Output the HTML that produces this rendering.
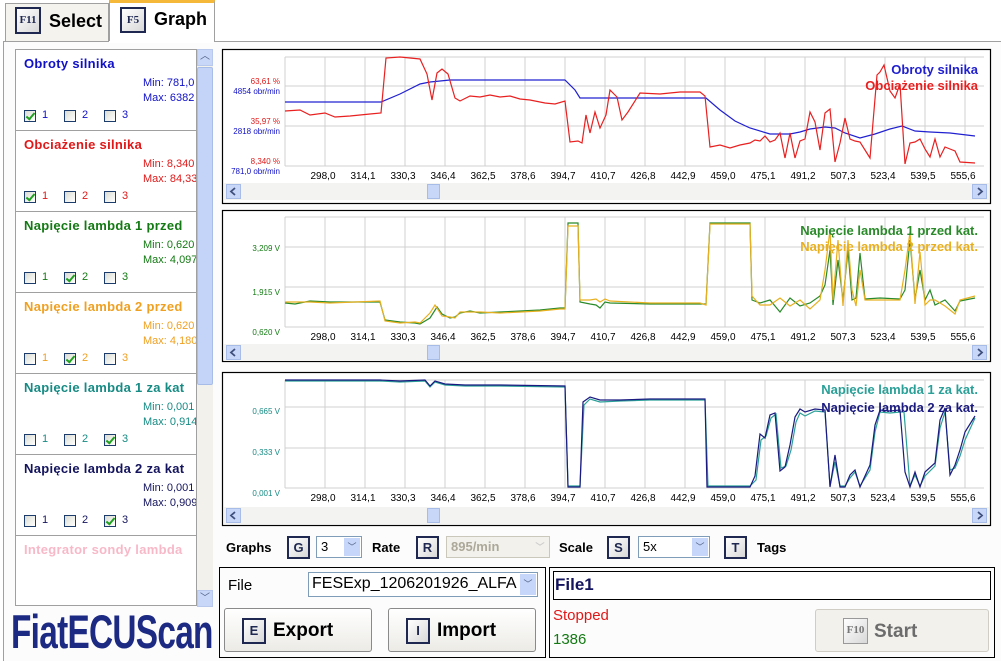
<!DOCTYPE html>
<html><head><meta charset="utf-8"><style>
*{box-sizing:border-box;margin:0;padding:0}
body{width:1001px;height:661px;background:#fff;font-family:"Liberation Sans",Arial,sans-serif;position:relative;overflow:hidden}
.a{position:absolute}
.tab{position:absolute;border:1px solid #a0a0a0;border-bottom:none;font-weight:bold;font-size:18px}
.key{position:absolute;width:23px;height:23px;border:2px solid #1e2850;background:linear-gradient(135deg,#fff,#d8d8d8);font-weight:bold;font-size:13px;text-align:center;line-height:19px;color:#1e2850}
.item{position:absolute;left:16px;width:180px;height:81px;border-bottom:1px solid #a0a0a0;overflow:hidden}
.item .t{position:absolute;left:8px;top:6px;font-weight:bold;font-size:13px;white-space:nowrap;letter-spacing:.3px}
.item .m{position:absolute;left:127px;font-size:11px;white-space:nowrap}
.cb{position:absolute;top:60px;width:12px;height:12px;border:1px solid #1c3c6c;background:linear-gradient(135deg,#dcdcd4,#fff)}
.cbl{position:absolute;top:59px;font-size:11px}
.chk::after{content:"";position:absolute;left:3px;top:0px;width:3px;height:7px;border:solid #21a121;border-width:0 2px 2px 0;transform:rotate(40deg)}
.lbl{position:absolute;font-weight:bold;font-size:13px}
.combo{position:absolute;height:22px;border:1px solid #7f9db9;background:#fff;font-size:13px;padding:2px 4px}
.combo i{position:absolute;right:1px;top:1px;width:16px;height:18px;background:#c6d6fa;font-style:normal;color:#4d6185;font-size:9px;text-align:center;line-height:18px}
.btn{position:absolute;border:1px solid #8a8a8a;border-radius:3px;background:linear-gradient(#fff,#ecebe6);font-weight:bold;font-size:19px}
</style></head><body>
<div class="tab" style="left:5px;top:3px;width:104px;height:39px;background:#f4f3ee"></div>
<div class="key" style="left:15px;top:7px;width:26px;height:27px;font-size:11px;line-height:23px;font-family:'Liberation Serif',serif">F11</div>
<div class="a" style="left:49px;top:11px;font-weight:bold;font-size:18px">Select</div>
<div class="tab" style="left:109px;top:0;width:106px;height:43px;background:#fff;border-top:3px solid #f6b838;border-color:#a0a0a0;border-top-color:#f6b838"></div>
<div class="key" style="left:120px;top:7px;width:26px;height:26px;font-size:11px;line-height:22px;font-family:'Liberation Serif',serif">F5</div>
<div class="a" style="left:154px;top:9px;font-weight:bold;font-size:18px">Graph</div>
<div class="a" style="left:3px;top:41px;width:998px;height:620px;border:1px solid #a0a0a0;border-bottom:none;border-right:none;background:#fcfcfc"></div>
<div class="a" style="left:109px;top:41px;width:105px;height:2px;background:#fff"></div>
<div class="a" style="left:15px;top:49px;width:182px;height:557px;border:1px solid #a0a0a0;background:#fff"></div>
<div class="item" style="top:50px;color:#1010c8"><div class="t">Obroty silnika</div><div class="m" style="top:27px">Min: 781,0</div><div class="m" style="top:42px">Max: 6382</div>
<div class="cb chk" style="left:8px"></div><div class="cbl" style="left:26px">1</div><div class="cb" style="left:48px"></div><div class="cbl" style="left:66px">2</div><div class="cb" style="left:88px"></div><div class="cbl" style="left:106px">3</div></div>
<div class="item" style="top:131px;color:#e01818"><div class="t">Obciażenie silnika</div><div class="m" style="top:27px">Min: 8,340</div><div class="m" style="top:42px">Max: 84,33</div>
<div class="cb chk" style="left:8px"></div><div class="cbl" style="left:26px">1</div><div class="cb" style="left:48px"></div><div class="cbl" style="left:66px">2</div><div class="cb" style="left:88px"></div><div class="cbl" style="left:106px">3</div></div>
<div class="item" style="top:212px;color:#137a13"><div class="t">Napięcie lambda 1 przed</div><div class="m" style="top:27px">Min: 0,620</div><div class="m" style="top:42px">Max: 4,097</div>
<div class="cb" style="left:8px"></div><div class="cbl" style="left:26px">1</div><div class="cb chk" style="left:48px"></div><div class="cbl" style="left:66px">2</div><div class="cb" style="left:88px"></div><div class="cbl" style="left:106px">3</div></div>
<div class="item" style="top:293px;color:#f0a020"><div class="t">Napięcie lambda 2 przed</div><div class="m" style="top:27px">Min: 0,620</div><div class="m" style="top:42px">Max: 4,180</div>
<div class="cb" style="left:8px"></div><div class="cbl" style="left:26px">1</div><div class="cb chk" style="left:48px"></div><div class="cbl" style="left:66px">2</div><div class="cb" style="left:88px"></div><div class="cbl" style="left:106px">3</div></div>
<div class="item" style="top:374px;color:#168b84"><div class="t">Napięcie lambda 1 za kat</div><div class="m" style="top:27px">Min: 0,001</div><div class="m" style="top:42px">Max: 0,914</div>
<div class="cb" style="left:8px"></div><div class="cbl" style="left:26px">1</div><div class="cb" style="left:48px"></div><div class="cbl" style="left:66px">2</div><div class="cb chk" style="left:88px"></div><div class="cbl" style="left:106px">3</div></div>
<div class="item" style="top:455px;color:#14145e"><div class="t">Napięcie lambda 2 za kat</div><div class="m" style="top:27px">Min: 0,001</div><div class="m" style="top:42px">Max: 0,909</div>
<div class="cb" style="left:8px"></div><div class="cbl" style="left:26px">1</div><div class="cb" style="left:48px"></div><div class="cbl" style="left:66px">2</div><div class="cb chk" style="left:88px"></div><div class="cbl" style="left:106px">3</div></div>
<div class="a" style="left:24px;top:542px;font-weight:bold;font-size:13px;color:#f8b8c8;white-space:nowrap;letter-spacing:.3px">Integrator sondy lambda</div>
<div class="a" style="left:197px;top:49px;width:16px;height:558px;background:#f2f1ec"></div>
<div class="a" style="left:197px;top:49px;width:16px;height:17px;background:#c8d6f8;border:1px solid #b8c8ec;color:#4d6185;font-size:10px;text-align:center;line-height:14px">︿</div>
<div class="a" style="left:197px;top:67px;width:16px;height:318px;background:#c4d4f8;border:1px solid #a8bce8;border-radius:2px"></div>
<div class="a" style="left:197px;top:590px;width:16px;height:17px;background:#c8d6f8;border:1px solid #b8c8ec;color:#4d6185;font-size:10px;text-align:center;line-height:15px">﹀</div>
<svg class="a" style="left:0;top:0" width="1001" height="661" font-family="Liberation Sans,Arial,sans-serif">
<g fill="#fff" stroke="#000" stroke-width="1.2">
<rect x="222.5" y="49.5" width="768" height="154"/>
<rect x="222.5" y="210.5" width="768" height="151"/>
<rect x="222.5" y="372.5" width="768" height="153"/>
</g>
<g stroke="#d0d0d0" stroke-width="1">
<path d="M285 57V166M325 57V166M365 57V166M405 57V166M445 57V166M485 57V166M525 57V166M565 57V166M605 57V166M645 57V166M685 57V166M725 57V166M765 57V166M805 57V166M845 57V166M885 57V166M925 57V166M965 57V166M285 57H984M285 86H984M285 126H984M285 166H984"/>
<path d="M285 217V327M325 217V327M365 217V327M405 217V327M445 217V327M485 217V327M525 217V327M565 217V327M605 217V327M645 217V327M685 217V327M725 217V327M765 217V327M805 217V327M845 217V327M885 217V327M925 217V327M965 217V327M285 217H984M285 247H984M285 287H984M285 327H984"/>
<path d="M285 380V488M325 380V488M365 380V488M405 380V488M445 380V488M485 380V488M525 380V488M565 380V488M605 380V488M645 380V488M685 380V488M725 380V488M765 380V488M805 380V488M845 380V488M885 380V488M925 380V488M965 380V488M285 380H984M285 407H984M285 448H984M285 488H984"/>
</g>
<g font-size="10" text-anchor="middle" fill="#000">
<text y="179"><tspan x="323">298,0</tspan><tspan x="363">314,1</tspan><tspan x="403">330,3</tspan><tspan x="443">346,4</tspan><tspan x="483">362,5</tspan><tspan x="523">378,6</tspan><tspan x="563">394,7</tspan><tspan x="603">410,7</tspan><tspan x="643">426,8</tspan><tspan x="683">442,9</tspan><tspan x="723">459,0</tspan><tspan x="763">475,1</tspan><tspan x="803">491,2</tspan><tspan x="843">507,3</tspan><tspan x="883">523,4</tspan><tspan x="923">539,5</tspan><tspan x="963">555,6</tspan></text>
<text y="340"><tspan x="323">298,0</tspan><tspan x="363">314,1</tspan><tspan x="403">330,3</tspan><tspan x="443">346,4</tspan><tspan x="483">362,5</tspan><tspan x="523">378,6</tspan><tspan x="563">394,7</tspan><tspan x="603">410,7</tspan><tspan x="643">426,8</tspan><tspan x="683">442,9</tspan><tspan x="723">459,0</tspan><tspan x="763">475,1</tspan><tspan x="803">491,2</tspan><tspan x="843">507,3</tspan><tspan x="883">523,4</tspan><tspan x="923">539,5</tspan><tspan x="963">555,6</tspan></text>
<text y="501"><tspan x="323">298,0</tspan><tspan x="363">314,1</tspan><tspan x="403">330,3</tspan><tspan x="443">346,4</tspan><tspan x="483">362,5</tspan><tspan x="523">378,6</tspan><tspan x="563">394,7</tspan><tspan x="603">410,7</tspan><tspan x="643">426,8</tspan><tspan x="683">442,9</tspan><tspan x="723">459,0</tspan><tspan x="763">475,1</tspan><tspan x="803">491,2</tspan><tspan x="843">507,3</tspan><tspan x="883">523,4</tspan><tspan x="923">539,5</tspan><tspan x="963">555,6</tspan></text>
</g>
<g font-size="8" text-anchor="end">
<text x="280" y="84" fill="#e01818">63,61 %</text><text x="280" y="94" fill="#1010c8">4854 obr/min</text>
<text x="280" y="124" fill="#e01818">35,97 %</text><text x="280" y="134" fill="#1010c8">2818 obr/min</text>
<text x="280" y="164" fill="#e01818">8,340 %</text><text x="280" y="174" fill="#1010c8">781,0 obr/min</text>
<g fill="#137a13"><text x="280" y="251">3,209 V</text><text x="280" y="295">1,915 V</text><text x="280" y="335">0,620 V</text></g>
<g fill="#168b84"><text x="280" y="414">0,665 V</text><text x="280" y="455">0,333 V</text><text x="280" y="496">0,001 V</text></g>
</g>
<g fill="none" stroke-width="1.2">
<polyline stroke="#2020d0" points="285,102 381,102 400,94 420,84 430,82 440,81 450,80 565,80 575,90 580,98 706,98 720,110 735,121 750,128 770,134 790,134 800,132 810,129 825,127 835,128 845,133 860,138 875,134 890,129 902,126 915,131 930,132 950,133 975,136"/>
<polyline stroke="#e82020" points="285,111 300,110 310,115 325,113 335,117 350,116 370,114 381,113 386,58 400,57 420,59 427,74 432,100 437,73 442,69 448,74 455,98 460,101 470,96 480,97 490,95 500,97 510,96 520,99 530,100 545,103 555,104 565,101 570,142 578,141 582,143 586,115 590,133 595,112 600,128 606,115 610,90 617,97 622,120 628,112 640,93 660,94 680,92 700,92 705,96 710,147 720,145 730,148 740,145 750,143 755,140 760,141 765,136 770,142 775,140 780,133 785,158 790,133 795,158 800,141 805,139 810,112 815,122 820,150 825,113 830,109 835,162 840,143 845,118 850,139 855,141 860,142 865,150 870,158 877,75 880,72 884,65 890,91 895,98 900,84 905,164 910,143 915,142 920,139 925,149 930,157 935,139 940,157 945,147 950,149 955,151 960,162 975,163"/>
<polyline stroke="#2a8a2a" points="285,303 295,304 310,301 330,302 380,302 385,320 400,322 415,323 420,324 430,318 437,307 442,314 450,318 455,317 460,313 470,311 480,313 500,312 540,310 560,308 565,308 568,223 578,223 580,302 590,304 596,305 600,308 605,302 610,303 650,304 700,304 706,304 710,223 750,223 752,300 760,303 770,300 780,312 790,298 800,306 810,303 820,296 825,285 830,250 833,305 838,260 843,300 848,250 852,300 856,298 860,253 865,299 880,298 900,299 905,290 910,240 915,299 920,270 925,300 930,290 935,305 945,300 955,311 960,301 975,298"/>
<polyline stroke="#e8b020" points="285,302 295,302 310,302 330,303 380,301 385,321 400,323 415,322 420,323 430,313 435,305 442,316 450,317 455,318 460,312 470,312 480,312 500,313 540,311 560,309 565,309 568,226 578,226 580,300 590,300 596,299 600,302 605,299 610,301 650,303 700,303 706,305 710,224 750,224 752,296 760,305 770,305 780,298 790,306 800,300 810,309 820,300 825,270 830,230 833,300 838,240 843,306 848,240 852,290 856,306 860,270 865,300 880,300 900,300 905,270 910,232 915,304 920,252 925,305 930,300 935,300 945,306 955,314 960,300 975,296"/>
<polyline stroke="#2aa098" points="285,381 380,381 400,382 425,381 430,387 435,382 445,385 465,386 500,386 565,387 568,486 580,486 584,405 590,399 600,402 620,401 650,400 705,400 708,486 750,486 756,480 761,440 766,436 771,418 776,414 781,468 786,466 791,450 796,422 800,413 805,416 815,411 825,412 830,486 835,462 840,486 845,486 850,478 855,472 860,486 870,470 875,432 880,412 890,413 900,412 904,412 910,486 915,475 920,486 925,476 935,466 940,428 945,412 950,470 955,468 960,456 965,440 975,418"/>
<polyline stroke="#1a1a80" points="285,380 380,380 400,381 425,380 430,386 435,381 445,384 465,385 500,385 565,386 568,487 580,487 583,402 590,397 600,400 620,400 650,399 705,399 707,487 750,487 755,476 760,434 765,438 770,415 775,413 780,471 785,467 790,445 795,417 800,409 805,412 815,409 825,410 830,487 835,455 840,487 845,487 850,475 855,470 860,487 870,465 875,425 880,410 890,411 900,410 905,472 910,487 915,472 920,487 925,472 935,463 940,420 945,408 950,475 955,465 960,450 965,432 975,416"/>
</g>
<g font-size="13" font-weight="bold" text-anchor="end">
<text x="978" y="74" fill="#2020d0">Obroty silnika</text><text x="978" y="90" fill="#e82020">Obciażenie silnika</text>
<text x="978" y="235" fill="#2a8a2a">Napięcie lambda 1 przed kat.</text><text x="978" y="251" fill="#e8b020">Napięcie lambda 2 przed kat.</text>
<text x="978" y="394" fill="#2aa098">Napięcie lambda 1 za kat.</text><text x="978" y="412" fill="#1a1a80">Napięcie lambda 2 za kat.</text>
</g>
<g>
<rect x="224" y="183" width="765" height="17" fill="#f3f3f1"/><rect x="224" y="344" width="765" height="17" fill="#f3f3f1"/><rect x="224" y="507" width="765" height="17" fill="#f3f3f1"/>
<g fill="#c8d6f8" stroke="#a8bce8">
<rect x="226.5" y="184.5" width="14" height="14"/><rect x="427.5" y="184.5" width="12" height="14"/><rect x="972.5" y="184.5" width="14" height="14"/>
<rect x="226.5" y="345.5" width="14" height="14"/><rect x="427.5" y="345.5" width="12" height="14"/><rect x="972.5" y="345.5" width="14" height="14"/>
<rect x="226.5" y="508.5" width="14" height="14"/><rect x="427.5" y="508.5" width="12" height="14"/><rect x="972.5" y="508.5" width="14" height="14"/>
</g>
<g fill="none" stroke="#3d4f7a" stroke-width="1.8">
<path d="M235 188l-4 3.5 4 3.5M235 349l-4 3.5 4 3.5M235 512l-4 3.5 4 3.5M978 188l4 3.5-4 3.5M978 349l4 3.5-4 3.5M978 512l4 3.5-4 3.5"/>
</g>
</g>
</svg>
<div class="lbl" style="left:226px;top:540px">Graphs</div>
<div class="key" style="left:287px;top:536px">G</div>
<div class="combo" style="left:316px;top:536px;width:46px">3<i>﹀</i></div>
<div class="lbl" style="left:372px;top:540px">Rate</div>
<div class="key" style="left:416px;top:536px">R</div>
<div class="combo" style="left:446px;top:536px;width:104px;background:#f2f1ec;border-color:#cac8bb;color:#aca899;font-weight:bold">895/min<i style="background:#f2f1ec;color:#ccc">﹀</i></div>
<div class="lbl" style="left:559px;top:540px">Scale</div>
<div class="key" style="left:607px;top:536px">S</div>
<div class="combo" style="left:638px;top:536px;width:72px">5x<i>﹀</i></div>
<div class="key" style="left:724px;top:536px">T</div>
<div class="lbl" style="left:757px;top:540px">Tags</div>
<div class="a" style="left:219px;top:567px;width:327px;height:91px;border:1px solid #000;background:#fcfcfc"></div>
<div class="a" style="left:228px;top:577px;font-size:15px">File</div>
<div class="combo" style="left:308px;top:572px;width:230px;height:25px;font-size:16px;padding:2px 3px;white-space:nowrap;overflow:hidden">FESExp_1206201926_ALFA<i style="height:21px;line-height:21px;background:#c6d6fa">﹀</i></div>
<div class="btn" style="left:224px;top:608px;width:148px;height:44px"><div class="key" style="left:17px;top:9px;width:24px;height:26px;line-height:22px">E</div><span class="a" style="left:48px;top:11px">Export</span></div>
<div class="btn" style="left:388px;top:608px;width:148px;height:44px"><div class="key" style="left:17px;top:9px;width:24px;height:26px;line-height:22px">I</div><span class="a" style="left:48px;top:11px">Import</span></div>
<div class="a" style="left:549px;top:567px;width:446px;height:91px;border:1px solid #000;background:#fcfcfc"></div>
<div class="a" style="left:553px;top:571px;width:438px;height:29px;border:1px solid #000;background:#fff;font-weight:bold;font-size:17px;color:#14145e;padding:3px 1px">File1</div>
<div class="a" style="left:553px;top:607px;font-size:15px;color:#e01818">Stopped</div>
<div class="a" style="left:553px;top:631px;font-size:15px;color:#137a13">1386</div>
<div class="btn" style="left:815px;top:609px;width:174px;height:43px;color:#6c6c6c;background:#f2f1ec;border-color:#cfcdc4"><div class="key" style="left:27px;top:8px;width:25px;height:26px;line-height:22px;border:1px solid #999;color:#777;font-size:11px;font-family:'Liberation Serif',serif">F10</div><span class="a" style="left:58px;top:11px">Start</span></div>
<div class="a" style="left:11px;top:604px;font-weight:bold;font-size:47px;color:#1c2a84;letter-spacing:-1px;transform:scaleX(.71);transform-origin:left top;white-space:nowrap">FiatECUScan</div>
</body></html>
